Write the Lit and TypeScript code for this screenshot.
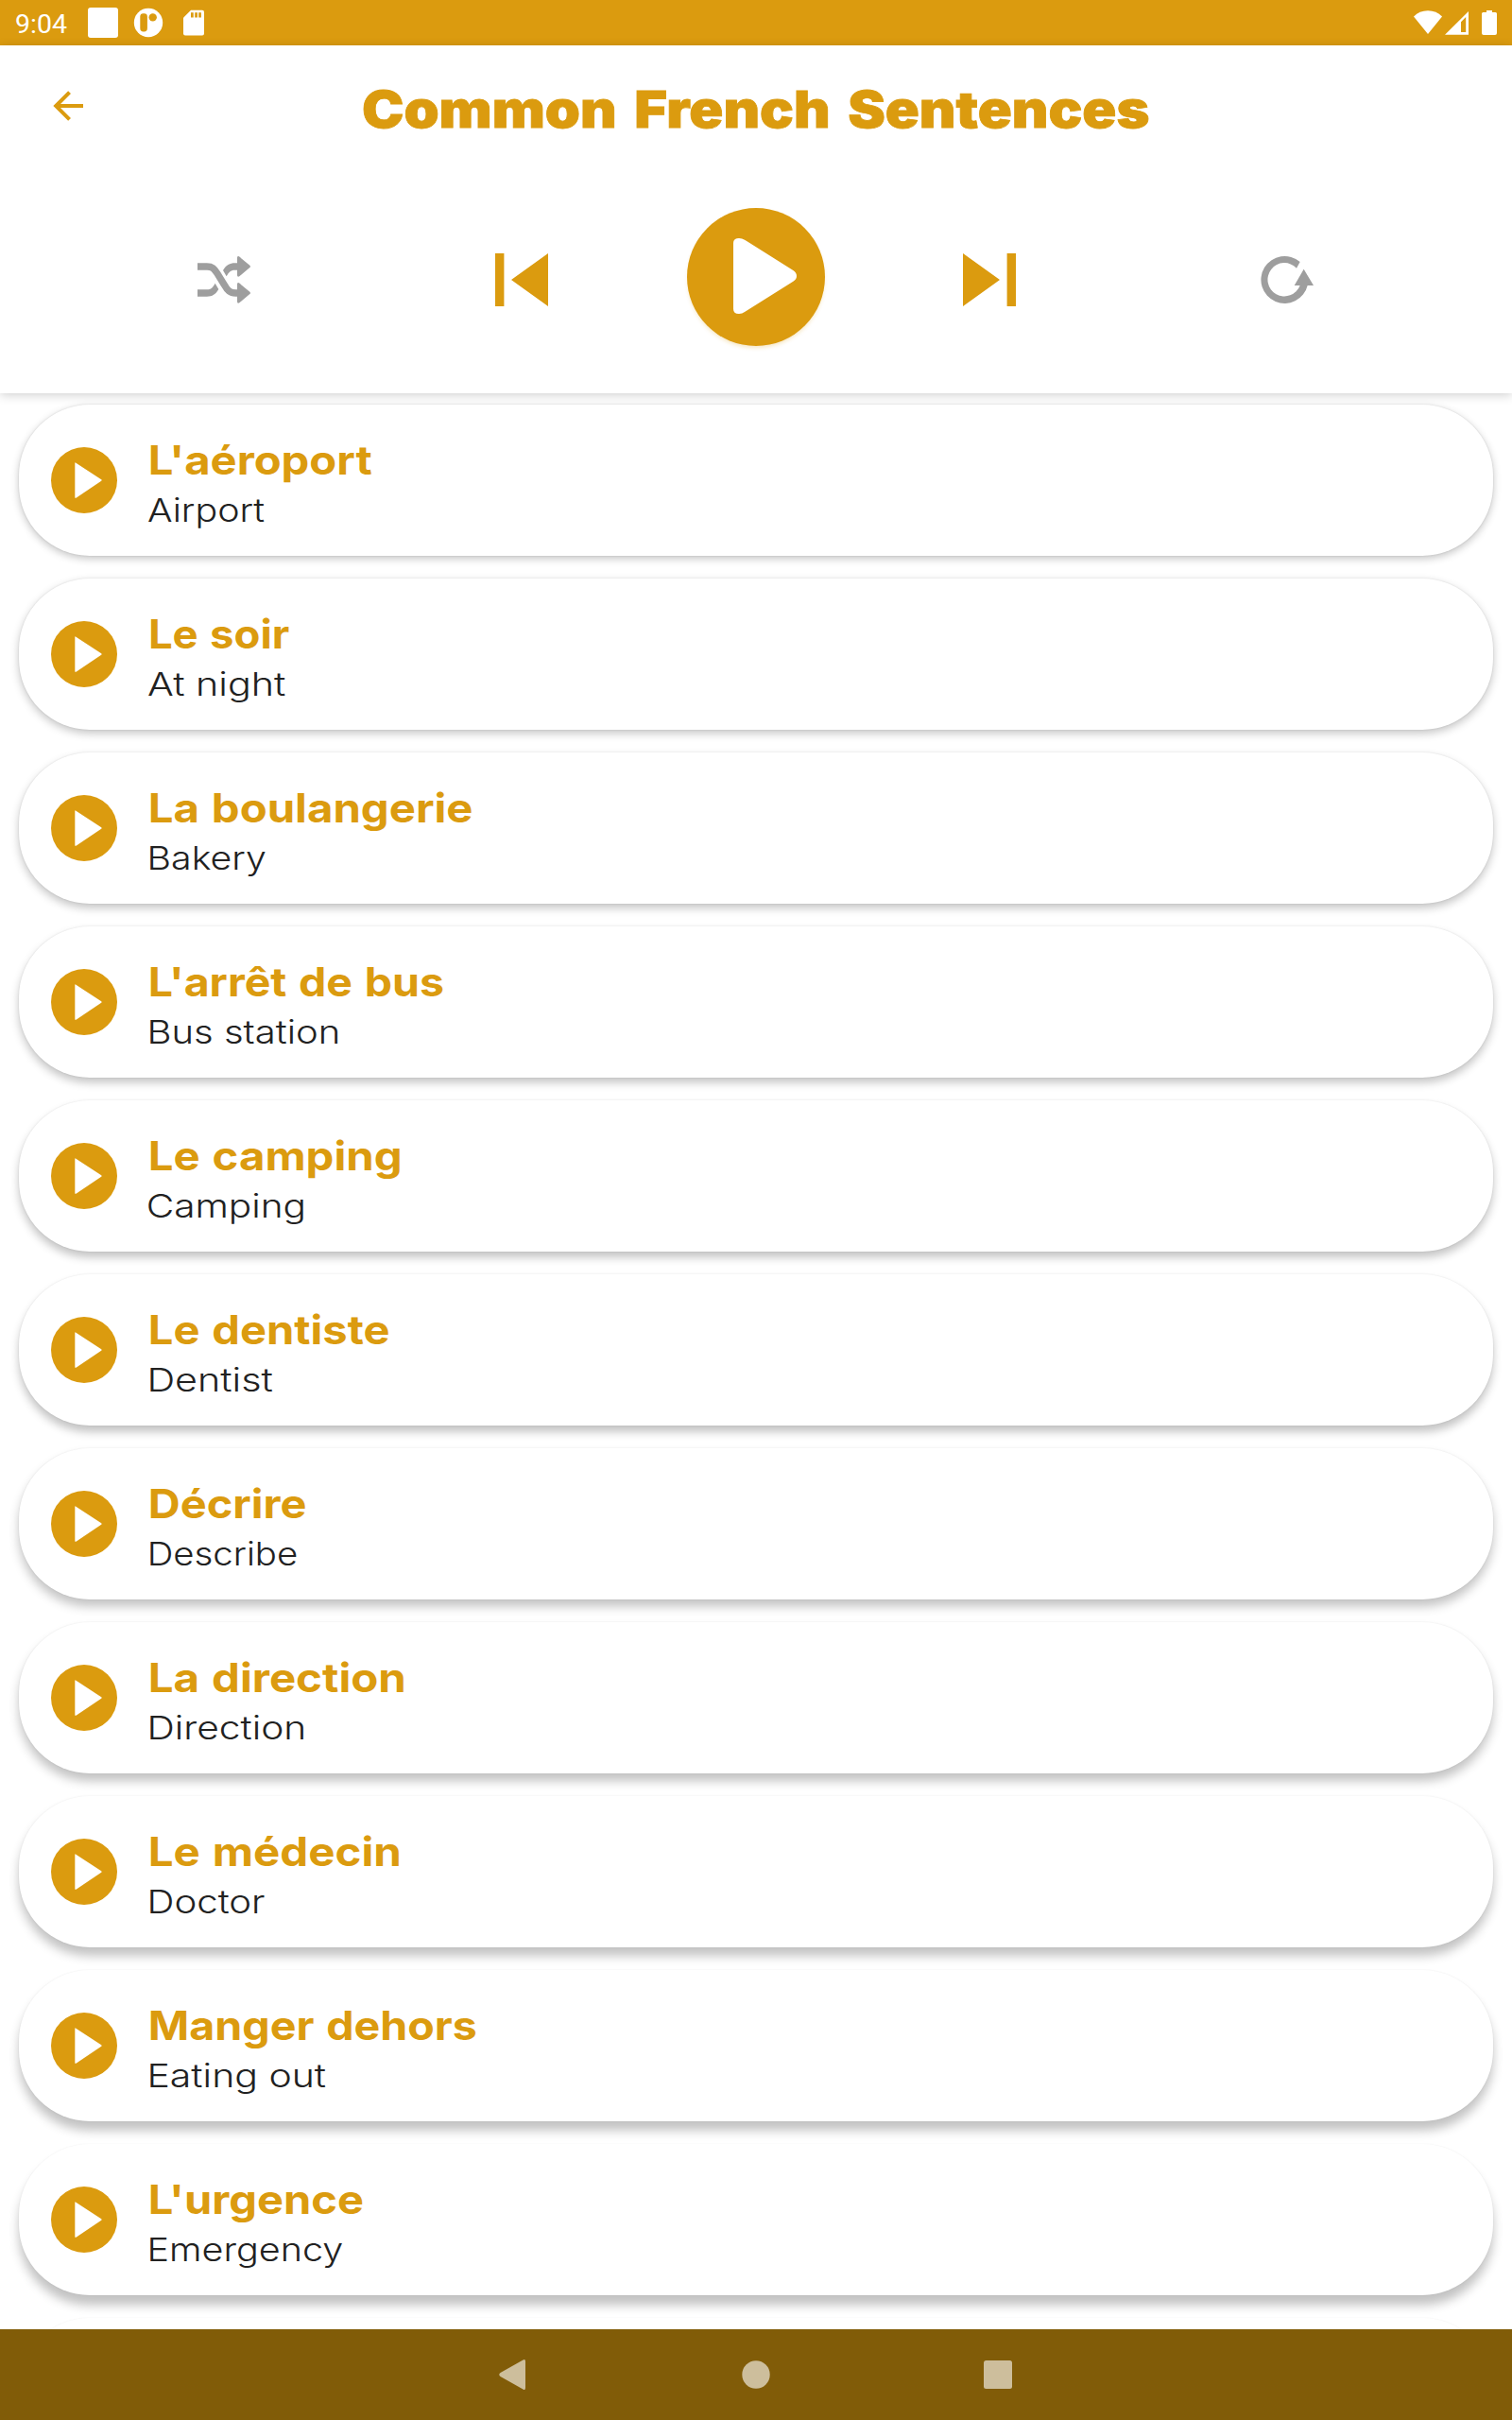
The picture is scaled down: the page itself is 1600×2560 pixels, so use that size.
import { LitElement, html, css, svg } from "lit";
import { customElement, property } from "lit/decorators.js";

interface Phrase {
  fr: string;
  frWidth: number;
  en: string;
  enWidth: number;
}

const phrases: Phrase[] = [
  { fr: "L'aéroport", frWidth: 234, en: "Airport", enWidth: 123.7 },
  { fr: "Le soir", frWidth: 147, en: "At night", enWidth: 146 },
  { fr: "La boulangerie", frWidth: 340, en: "Bakery", enWidth: 122.5 },
  { fr: "L'arrêt de bus", frWidth: 310, en: "Bus station", enWidth: 198.5 },
  { fr: "Le camping", frWidth: 264.5, en: "Camping", enWidth: 163.7 },
  { fr: "Le dentiste", frWidth: 252, en: "Dentist", enWidth: 129.5 },
  { fr: "Décrire", frWidth: 164, en: "Describe", enWidth: 155 },
  { fr: "La direction", frWidth: 268, en: "Direction", enWidth: 162.5 },
  { fr: "Le médecin", frWidth: 263, en: "Doctor", enWidth: 121 },
  { fr: "Manger dehors", frWidth: 345, en: "Eating out", enWidth: 185.7 },
  { fr: "L'urgence", frWidth: 224.5, en: "Emergency", enWidth: 204 },
];

const pen = document.createElement("canvas").getContext("2d")! as any;

/** One line of text whose ink is stretched to a given width. */
@customElement("fit-text")
export class FitText extends LitElement {
  @property() text = "";
  @property({ type: Number }) ink = 100;
  @property({ type: Number }) size = 40;
  @property({ type: Number }) weight = 400;
  @property({ type: Number }) line = 50;
  @property({ type: Number }) base = 40;
  @property({ type: Number }) space = 0;

  static styles = css`
    :host { display: block; }
    svg { display: block; overflow: visible; }
    text { font-family: Inter, "Liberation Sans", sans-serif; fill: currentColor; }
  `;

  render() {
    pen.font = `${this.weight} ${this.size}px Inter, "Liberation Sans", sans-serif`;
    pen.wordSpacing = `${this.space}px`;
    const m = pen.measureText(this.text);
    const k = this.ink / (m.actualBoundingBoxLeft + m.actualBoundingBoxRight);
    return html`<svg width=${this.ink} height=${this.line}>
      <text x=${m.actualBoundingBoxLeft * k} y=${this.base} font-size=${this.size}
        font-weight=${this.weight} word-spacing=${this.space} textLength=${m.width * k}
        lengthAdjust="spacingAndGlyphs">${this.text}</text>
    </svg>`;
  }
}

@customElement("status-bar")
export class StatusBar extends LitElement {
  static styles = css`
    :host {
      display: flex; align-items: center; height: 48px; padding: 0 16px;
      box-sizing: border-box; background: #db9b0f; color: #fff;
      font: 28.5px/48px Roboto, sans-serif;
    }
    .time { width: 77px; padding-top: 3px; white-space: nowrap; }
    .left { display: block; }
    .right { display: block; margin-left: auto; }
  `;
  render() {
    return html`
      <span class="time">9:04</span>
      <svg class="left" width="130" height="48" viewBox="93 0 130 48" fill="#fff">
        <rect x="93" y="8" width="32" height="32" rx="3" />
        <circle cx="157" cy="24" r="15.2" />
        <rect x="148.3" y="14.3" width="7.6" height="19.2" rx="3.4" fill="#db9b0f" />
        <circle cx="161.7" cy="18.4" r="4.2" fill="#db9b0f" />
        <path d="M202 10.7H214Q216 10.7 216 12.7V35.5Q216 37.5 214 37.5H196Q194 37.5 194 35.5V18.7Z" />
        <path d="M202 13.2h2.7v5.4H202zM206.2 13.2h2.7v5.4h-2.7zM210.2 13.2h2.7v5.4h-2.7z" fill="#db9b0f" />
      </svg>
      <svg class="right" width="88" height="48" viewBox="1496 0 88 48" fill="#fff">
        <path d="M1496 17.5Q1502 11.3 1511 11.3T1526 17.5L1511 36Z" />
        <path fill-rule="evenodd" d="M1554 12V36.7H1529ZM1551.2 18L1546 23.2V34H1551.2Z" />
        <path d="M1573 11h6v2h3.5q1.5 0 1.5 1.500V35q0 2-2 2h-12q-2 0-2-2V14.500q0-1.500 1.500-1.500H1573z" />
      </svg>
    `;
  }
}

@customElement("phrase-card")
export class PhraseCard extends LitElement {
  @property({ attribute: false }) phrase?: Phrase;

  static styles = css`
    :host {
      display: flex; align-items: center; gap: 35px; height: 160px;
      padding-left: 34px; box-sizing: border-box; border-radius: 75px;
      background: #fff; color: #212121;
    }
    .icon { display: block; flex: none; }
    .lines { display: flex; flex-direction: column; }
    .fr { color: #db9b0f; }
    .wide-a { margin-left: -2.6px; }
    .wide-c { margin-left: -2px; }
  `;

  render() {
    const p = this.phrase;
    const edge = p?.en[0] === "A" ? "wide-a" : p?.en[0] === "C" ? "wide-c" : "";
    return html`
      <svg class="icon" width="70" height="70" viewBox="0 0 70 70">
        <circle cx="35" cy="35" r="35" fill="#db9b0f" />
        <path d="M26 16.400L53.200 34.300Q54.200 35 53.200 35.700L26.500 53.700Q25.300 54 25.300 53.200V17Q25.300 16.100 26 16.400Z" fill="#fff" />
      </svg>
      ${p
        ? html`<div class="lines">
            <fit-text class="fr" .text=${p.fr} .ink=${p.frWidth} .size=${42.6} .weight=${700} .line=${54} .base=${42} .space=${1.5}></fit-text>
            <fit-text class=${edge} .text=${p.en} .ink=${p.enWidth} .size=${34.6} .weight=${300} .line=${42} .base=${38}></fit-text>
          </div>`
        : ""}
    `;
  }
}

@customElement("app-root")
export class AppRoot extends LitElement {
  static styles = css`
    :host {
      display: flex; flex-direction: column; width: 1600px; height: 2560px;
      overflow: hidden; background: #fff; color: #db9b0f;
    }
    .header {
      position: relative; flex: none; height: 368px; box-sizing: border-box;
      background: #fff; box-shadow: 0 2px 10px rgba(0, 0, 0, 0.19);
    }
    .bar { display: flex; align-items: center; height: 128px; padding-left: 48px; }
    .back { display: block; flex: none; margin-right: 287.5px; }
    .title { stroke: #db9b0f; stroke-width: 0.8px; }
    .controls { display: flex; align-items: center; height: 240px; padding: 0 209px; }
    .controls svg { display: block; flex: none; }
    .shuffle { margin-right: 259px; }
    .main { margin: -6px 146px 0 147px; overflow: visible; }
    .repeat { margin-left: 258.6px; }
    .list {
      flex: 1; min-height: 0; overflow: hidden; display: flex;
      flex-direction: column; gap: 24px; padding: 12px 20px 0;
    }
    .list phrase-card { flex: none; }
    .nav {
      flex: none; display: flex; align-items: center; justify-content: center;
      height: 96px; background: #815c08;
    }
  `;

  private shadow(i: number) {
    const y = 3 + i * 0.75;
    const blur = 9 + i * 0.2;
    return `box-shadow: 0 ${y}px ${blur}px rgba(0,0,0,${0.23 + i * 0.001}), 0 0 2px rgba(0,0,0,${0.12 - i * 0.006})`;
  }

  render() {
    const arrow = () => svg`<path d="M213 218q0-7 6-4L253 242q4 4 0 7L220 277q-7 3-7-4Z" />`;
    return html`
      <status-bar></status-bar>
      <div class="header">
        <div class="bar">
          <svg class="back" width="48" height="48" viewBox="0 0 24 24" fill="#db9b0f">
            <path d="M20,11V13H8L13.5,18.5L12.08,19.92L4.16,12L12.08,4.08L13.5,5.5L8,11H20Z" />
          </svg>
          <fit-text class="title" .text=${"Common French Sentences"} .ink=${832} .size=${53.4} .weight=${900} .line=${60} .base=${53} .space=${6}></fit-text>
        </div>
        <div class="controls">
          <svg class="shuffle" width="56" height="56" viewBox="87 204 168 168" fill="#9e9e9e">
            <path d="M87 246H117C134 246 140 252 150 268L172 304C182 322 190 330 208 330H216" fill="none" stroke="#9e9e9e" stroke-width="22" />
            <path d="M168 258C178 241 190 235 205 235H214V257H205C192 257 186 264 179 277Z" />
            <path d="M87 319H117C130 319 136 312 143 299L154 318C145 334 134 341 117 341H87Z" />
            ${arrow()}<g transform="translate(0 84)">${arrow()}</g>
          </svg>
          <svg width="56" height="56" viewBox="0 0 56 56" fill="#db9b0f">
            <path d="M0 0H9.400V56H0ZM56 0V56L17 28Z" />
          </svg>
          <svg class="main" width="146" height="146" viewBox="81 60 438 438">
            <defs><filter id="g" x="-10%" y="-10%" width="120%" height="125%"><feGaussianBlur stdDeviation="8" /></filter></defs>
            <circle cx="300" cy="288" r="214" fill="#db9b0f" opacity=".3" filter="url(#g)" />
            <circle cx="300" cy="279" r="219" fill="#db9b0f" />
            <path d="M228 172Q228 156 246 156Q256 156 264 161L418 258Q429 265 429 276Q429 287 418 293L264 390Q256 396 246 396Q228 396 228 380Z" fill="#fff" />
          </svg>
          <svg width="56" height="56" viewBox="0 0 56 56" fill="#db9b0f">
            <path d="M56 0H46.600V56H56ZM0 0V56L39 28Z" />
          </svg>
          <svg class="repeat" width="56" height="56" viewBox="101 84 168 168" fill="#9e9e9e">
            <path d="M226 111A75 75 0 1 0 250 186H269L238 134L208 186H226A53 53 0 1 1 215 131Z" />
          </svg>
        </div>
      </div>
      <div class="list">
        ${phrases.map((p, i) => html`<phrase-card .phrase=${p} style=${this.shadow(i)}></phrase-card>`)}
        <phrase-card style=${this.shadow(11)}></phrase-card>
      </div>
      <div class="nav">
        <svg width="544" height="40" viewBox="528 2492 544 40" fill="#cdbe9c">
          <path d="M553.500 2496.500Q556 2495 556 2498V2526Q556 2529 553.500 2527.500L529.500 2514Q527 2512 529.500 2510Z" />
          <circle cx="800" cy="2512" r="14.700" />
          <rect x="1041" y="2497" width="30" height="30" rx="2.500" />
        </svg>
      </div>
    `;
  }
}
